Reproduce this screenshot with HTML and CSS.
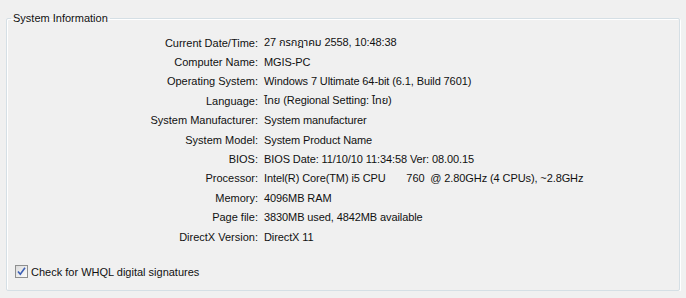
FILE: index.html
```html
<!DOCTYPE html>
<html lang="en">
<head>
    <meta charset="UTF-8">
    <title>System Information</title>
    <link rel="stylesheet" href="styles.css">
</head>
<body>

    <fieldset class="group">
        <legend>System Information</legend>

        <!-- label / value pairs -->
        <div class="info">
            <span class="label">Current Date/Time:</span>
            <span class="value">27 กรกฎาคม 2558, 10:48:38</span>

            <span class="label">Computer Name:</span>
            <span class="value">MGIS-PC</span>

            <span class="label">Operating System:</span>
            <span class="value">Windows 7 Ultimate 64-bit (6.1, Build 7601)</span>

            <span class="label">Language:</span>
            <span class="value">ไทย (Regional Setting: ไทย)</span>

            <span class="label">System Manufacturer:</span>
            <span class="value">System manufacturer</span>

            <span class="label">System Model:</span>
            <span class="value">System Product Name</span>

            <span class="label">BIOS:</span>
            <span class="value">BIOS Date: 11/10/10 11:34:58 Ver: 08.00.15</span>

            <span class="label">Processor:</span>
            <span class="value">Intel(R) Core(TM) i5 CPU       760  @ 2.80GHz (4 CPUs), ~2.8GHz</span>

            <span class="label">Memory:</span>
            <span class="value">4096MB RAM</span>

            <span class="label">Page file:</span>
            <span class="value">3830MB used, 4842MB available</span>

            <span class="label">DirectX Version:</span>
            <span class="value">DirectX 11</span>
        </div>

        <label class="check">
            <span class="box">
                <svg width="11" height="11" viewBox="0 0 11 11">
                    <path d="M2 5.5 L4.3 8.3 L9 1.8" fill="none" stroke="#3b5fb5" stroke-width="1.6"/>
                </svg>
            </span>
            Check for WHQL digital signatures
        </label>
    </fieldset>

</body>
</html>
```

FILE: styles.css
```css
* {
    box-sizing: border-box;
}

body {
    margin: 0;
    background-color: #f0f0f0;
    font-family: 'Liberation Sans', Arial, 'Noto Sans Thai', 'DejaVu Sans', sans-serif;
    font-size: 11px;
    color: #111;
}

.group {
    margin: 11px 6px 0 6px;
    width: 674px;
    height: 280px;
    padding: 8px 4px 0 4px;
    border: 1px solid #d5dfe5;
    border-radius: 2px;
    box-shadow: inset 1px 1px #fff, 1px 1px #fff;
}

.group legend {
    padding: 0 2px;
    line-height: 14px;
}

.info {
    display: grid;
    grid-template-columns: 247px 1fr;
    column-gap: 6px;
    grid-auto-rows: 19.4px;
    align-items: center;
}

.label {
    text-align: right;
}

.value {
    white-space: pre;
    letter-spacing: -0.1px;
}

.check {
    display: flex;
    align-items: center;
    gap: 3px;
    margin: 19px 0 0 4px;
}

.box {
    display: flex;
    align-items: center;
    justify-content: center;
    width: 13px;
    height: 13px;
    border: 1px solid #8e8f8f;
    background: linear-gradient(135deg, #dcdcdc, #fbfbfb);
}
```
